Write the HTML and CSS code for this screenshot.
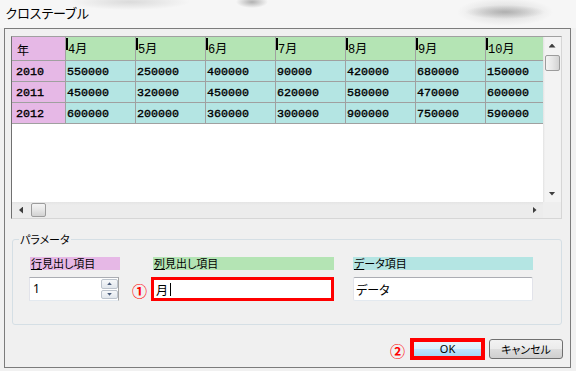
FILE: index.html
```html
<!DOCTYPE html>
<html lang="ja">
<head>
<meta charset="utf-8">
<title>クロステーブル</title>
<link rel="stylesheet" href="styles.css">
</head>
<body>
<div class="titlebar"><span class="title">クロステーブル</span></div>
<div class="dialog">
  <div class="listframe">
    <div class="listmain">
      <div class="gridview">
        <table class="cross">
          <colgroup>
            <col class="c-year"><col class="c-m"><col class="c-m"><col class="c-m"><col class="c-m"><col class="c-m"><col class="c-m"><col class="c-m">
          </colgroup>
          <thead>
            <tr>
              <th class="yh">年</th>
              <th class="mh">4月</th>
              <th class="mh">5月</th>
              <th class="mh">6月</th>
              <th class="mh">7月</th>
              <th class="mh">8月</th>
              <th class="mh">9月</th>
              <th class="mh">10月</th>
            </tr>
          </thead>
          <tbody>
            <tr><th class="yr">2010</th><td>550000</td><td>250000</td><td>400000</td><td>90000</td><td>420000</td><td>680000</td><td>150000</td></tr>
            <tr><th class="yr">2011</th><td>450000</td><td>320000</td><td>450000</td><td>620000</td><td>580000</td><td>470000</td><td>600000</td></tr>
            <tr><th class="yr">2012</th><td>600000</td><td>200000</td><td>360000</td><td>300000</td><td>900000</td><td>750000</td><td>590000</td></tr>
          </tbody>
        </table>
      </div>
      <div class="hscroll">
        <div class="sbtn hb"><span class="arr left"></span></div>
        <div class="thumb ht"></div>
        <div class="track"></div>
        <div class="sbtn hb"><span class="arr right"></span></div>
      </div>
    </div>
    <div class="vscroll">
      <div class="sbtn vb"><span class="arr up"></span></div>
      <div class="thumb vt"></div>
      <div class="track"></div>
      <div class="sbtn vb"><span class="arr down"></span></div>
      <div class="corner"></div>
    </div>
  </div>

  <fieldset class="params">
    <legend>パラメータ</legend>
    <div class="pgrid">
      <div class="plabel pink col1"><u>行</u>見出し項目</div>
      <div class="plabel green col3"><u>列</u>見出し項目</div>
      <div class="plabel cyan col5"><u>デ</u>ータ項目</div>

      <div class="spinner col1">
        <span class="val">1</span>
        <span class="spins">
          <span class="spin"><span class="sarr sup"></span></span>
          <span class="spin"><span class="sarr sdown"></span></span>
        </span>
      </div>
      <div class="mark col2">①</div>
      <div class="hilite col3"><span class="val">月</span><span class="caret"></span></div>
      <div class="tbox col5"><span class="val">データ</span></div>
    </div>
  </fieldset>

  <div class="buttons">
    <span class="mark">②</span>
    <div class="okframe"><span class="btn ok">OK</span></div>
    <span class="btn cancel">キャンセル</span>
  </div>
</div>
</body>
</html>
```

FILE: styles.css
```css
* { box-sizing: border-box; }
html, body { margin: 0; padding: 0; }
body {
  width: 576px;
  height: 371px;
  overflow: hidden;
  background: #f1f1f1;
  font-family: "Noto Sans CJK JP", "Noto Sans", sans-serif;
  color: #000;
}

/* title bar (blurred background behind) */
.titlebar {
  height: 28px;
  padding: 4px 0 0 5px;
  font-size: 13px;
  line-height: 18px;
  letter-spacing: -1px;
  background:
    radial-gradient(ellipse 16px 6px at 252px 2px, rgba(120,120,120,0.55), rgba(120,120,120,0) 100%),
    radial-gradient(ellipse 40px 7px at 505px 12px, rgba(150,150,150,0.6), rgba(150,150,150,0) 100%),
    radial-gradient(ellipse 48px 14px at 505px 12px, rgba(200,200,200,0.7), rgba(200,200,200,0) 100%),
    radial-gradient(ellipse 60px 8px at 130px 2px, rgba(200,200,200,0.6), rgba(200,200,200,0) 100%),
    #f6f6f6;
}

.dialog {
  margin-left: 4px;
  width: 567px;
  height: 340px;
  border: 1px solid #7c7c7c;
  background: #f0f0f0;
  padding: 7px 7px 0 6px;
}

/* list view */
.listframe {
  display: flex;
  width: 551px;
  height: 183px;
  border: 1px solid;
  border-color: #a0a0a0 #d6d6d6 #d6d6d6 #707070;
  background: #fff;
}
.listmain {
  width: 531px;
  display: flex;
  flex-direction: column;
}
.gridview {
  height: 165px;
  overflow: hidden;
  background: #fff;
}
.cross {
  table-layout: fixed;
  border-collapse: separate;
  border-spacing: 0;
  width: 544px;
}
.c-year { width: 54px; }
.c-m { width: 70px; }
.cross th, .cross td {
  border-right: 1px solid #a0a0a0;
  border-bottom: 1px solid #a0a0a0;
  padding: 0;
  text-align: left;
  white-space: nowrap;
  overflow: hidden;
  vertical-align: middle;
}
.cross thead tr { height: 24px; }
.cross tbody tr { height: 21px; }
.cross thead th {
  background: #b4e4b4;
  font-family: "Liberation Mono", "Noto Sans CJK JP", monospace;
  font-size: 12px;
  font-weight: normal;
  line-height: 14px;
  padding-top: 2px;
}
.cross th.yh {
  background: #e6b8e6;
  font-family: "Noto Sans CJK JP", sans-serif;
  padding-left: 5px;
}
.cross th.mh {
  position: relative;
  padding-left: 2px;
}
.cross th.mh::before {
  content: "";
  position: absolute;
  left: 0;
  top: 1px;
  width: 2px;
  height: 12px;
  background: #000;
}
.cross tbody th.yr {
  background: #e6b8e6;
  padding-left: 4px;
}
.cross tbody td {
  background: #b4e5e3;
  padding-left: 1px;
}
.cross tbody th, .cross tbody td {
  font-family: "Liberation Mono", monospace;
  font-size: 11.7px;
  font-weight: normal;
  -webkit-text-stroke: 0.35px #000;
  line-height: 14px;
  padding-top: 1px;
}

/* scrollbars */
.sbtn {
  display: flex;
  align-items: center;
  justify-content: center;
  flex: none;
}
.arr {
  display: block;
  background: #3e3e3e;
}
.arr.up { width: 7px; height: 4px; clip-path: polygon(50% 0, 100% 100%, 0 100%); }
.arr.down { width: 7px; height: 4px; clip-path: polygon(0 0, 100% 0, 50% 100%); }
.arr.left { width: 4px; height: 7px; clip-path: polygon(100% 0, 100% 100%, 0 50%); }
.arr.right { width: 4px; height: 7px; clip-path: polygon(0 0, 100% 50%, 0 100%); }

.hscroll {
  height: 16px;
  display: flex;
  background: linear-gradient(#e4e4e4, #ececec 3px, #ececec);
}
.hb { width: 18px; }
.hb:last-child { width: 17px; }
.ht {
  width: 15px;
  margin: 1px 0 1px 1px;
}
.track { flex: 1; }
.thumb {
  border: 1px solid #9c9c9c;
  border-radius: 2px;
}
.ht { background: linear-gradient(#f4f4f4, #e6e6e6 50%, #d2d2d2); }

.vscroll {
  width: 18px;
  display: flex;
  flex-direction: column;
  background: linear-gradient(to right, #e2e2e2, #f3f3f3 2px, #f3f3f3);
}
.vb { height: 17px; }
.vt {
  height: 16px;
  margin: 1px 1px 0 2px;
  background: linear-gradient(to right, #f4f4f4, #e6e6e6 50%, #d2d2d2);
}
.corner {
  height: 16px;
  background: #eeeeee;
}

/* parameters group */
.params {
  margin: 14px 0 0 1px;
  width: 550px;
  min-width: 0;
  border: 1px solid #d5dfe5;
  border-radius: 3px;
  padding: 12px 0 23px 6px;
}
.params legend {
  padding: 0 1px;
  font-size: 11px;
  line-height: 12px;
  font-feature-settings: "palt";
}
.pgrid {
  margin-left: 11px;
  display: grid;
  grid-template-columns: 90px 33px 181px 19px 180px;
  grid-template-rows: 13px 24px;
  row-gap: 7px;
}
.col1 { grid-column: 1; }
.col2 { grid-column: 2; }
.col3 { grid-column: 3; }
.col5 { grid-column: 5; }
.plabel {
  font-size: 11px;
  line-height: 13px;
  padding-left: 1px;
  font-feature-settings: "palt";
  white-space: nowrap;
}
.plabel u { text-underline-offset: 1px; }
.pink { background: #e6b8e6; }
.green { background: #b4e4b4; }
.cyan { background: #b4e5e3; }

.spinner {
  display: flex;
  align-items: stretch;
  width: 90px;
  margin-left: -1px;
  background: #fff;
  border: 1px solid;
  border-color: #abadb3 #a4a4a4 #e3e9ef #e2e3ea;
  font-size: 12px;
}
.spinner .val {
  flex: 1;
  padding-left: 3px;
  line-height: 22px;
  font-family: "Noto Sans", sans-serif;
}
.spins {
  width: 18px;
  display: flex;
  flex-direction: column;
  gap: 1px;
  padding: 1px 0 1px 1px;
}
.spin {
  flex: 1;
  display: flex;
  align-items: center;
  justify-content: center;
  border: 1px solid #bcc3cc;
  border-radius: 2px;
  background: linear-gradient(#f6f8fa, #e1e6ec);
}
.sarr { display: block; width: 5px; height: 3px; background: #4a5c7a; }
.sup { clip-path: polygon(50% 0, 100% 100%, 0 100%); }
.sdown { clip-path: polygon(0 0, 100% 0, 50% 100%); }

.mark {
  color: #ff0000;
  font-size: 15px;
  font-weight: bold;
  line-height: 15px;
}
.pgrid .mark {
  align-self: center;
  justify-self: end;
  margin-right: 6px;
  margin-top: 3px;
}
.hilite {
  display: flex;
  align-items: center;
  margin-left: -2px;
  width: 183px;
  border: 3px solid #ff0000;
  background: #fff;
  padding-left: 2px;
  font-size: 12px;
}
.caret {
  width: 1px;
  height: 13px;
  background: #000;
  margin-left: 2px;
}
.tbox {
  display: flex;
  align-items: center;
  background: #fff;
  border: 1px solid;
  border-color: #abadb3 #e2e3ea #e3e9ef #e2e3ea;
  border-radius: 2px;
  padding-left: 2px;
  font-size: 12px;
  font-feature-settings: "palt";
}

/* buttons */
.buttons {
  margin-top: 13px;
  display: flex;
  justify-content: flex-end;
  align-items: center;
  height: 22px;
}
.buttons .mark { margin-right: 5px; margin-top: 3px; }
.okframe {
  width: 75px;
  height: 22px;
  border: 4px solid #ff0000;
  display: flex;
}
.btn {
  display: flex;
  align-items: center;
  justify-content: center;
  font-size: 11px;
}
.ok {
  flex: 1;
  font-family: "Noto Sans", sans-serif;
  background: linear-gradient(#e8f5fd, #d9f0fc 50%, #bee6fd 51%, #a7d9f5);
  line-height: 12px;
}
.cancel {
  margin-left: 4px;
  width: 74px;
  height: 20px;
  border: 1px solid #707070;
  border-radius: 3px;
  background: linear-gradient(#f2f2f2, #ebebeb 50%, #dddddd 51%, #cfcfcf);
  font-feature-settings: "palt";
  line-height: 14px;
}
```
